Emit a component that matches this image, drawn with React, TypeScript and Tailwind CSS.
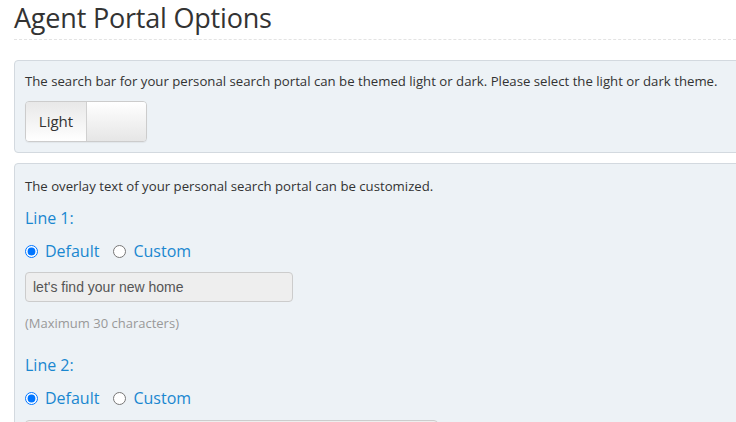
const sans = { fontFamily: '"Segoe UI", "Open Sans", "Noto Sans", sans-serif' };

const RadioRow = ({ name }: { name: string }) => (
  <div className="flex items-center text-[16px] text-[#1a87d0]">
    <label className="flex items-center">
      <input type="radio" name={name} defaultChecked className="m-0 h-[13px] w-[13px] accent-[#0075ff]" />
      <span className="ml-[7px]">Default</span>
    </label>
    <label className="ml-[14px] flex items-center">
      <input type="radio" name={name} className="m-0 h-[13px] w-[13px]" />
      <span className="ml-[7px]">Custom</span>
    </label>
  </div>
);

export default function App() {
  return (
    <div className="h-[422px] w-[736px] overflow-hidden bg-white pl-[14px] text-[#333]" style={sans}>
      <h1 className="mt-[1px] border-b border-dashed border-[#e3e3e3] pb-[4px] text-[27px] font-normal leading-[34px] tracking-[-0.2px] text-[#333]">
        Agent Portal Options
      </h1>

      <div className="mt-[20px] -mr-[10px] rounded-[4px] border border-[#d3d9df] bg-[#edf2f6] px-[10px] pt-[11px] pb-[10px]">
        <p className="text-[13.2px] leading-[18px]">
          The search bar for your personal search portal can be themed light or dark. Please select the light or dark theme.
        </p>
        <div className="mt-[11px] flex h-[41px] w-[122px] overflow-hidden rounded-[4px] border border-[#cccccc] shadow-[0_1px_1px_rgba(0,0,0,0.05)]">
          <div className="flex w-[61px] items-center justify-center bg-gradient-to-b from-[#e8e8e8] to-[#ffffff] text-[15px] text-[#333]">
            Light
          </div>
          <div className="w-[61px] border-l border-[#d0d0d0] bg-gradient-to-b from-[#ffffff] to-[#e6e6e6]" />
        </div>
      </div>

      <div className="mt-[10px] -mr-[10px] h-[300px] rounded-[4px] border border-[#d3d9df] bg-[#edf2f6] px-[10px] pt-[13px]">
        <p className="text-[13.2px] leading-[18px]">
          The overlay text of your personal search portal can be customized.
        </p>

        <div className="mt-[12px] text-[16px] leading-[22px] text-[#1a87d0]">Line 1:</div>
        <div className="mt-[10px]">
          <RadioRow name="line1" />
        </div>
        <div
          className="mt-[9px] flex h-[30px] w-[268px] items-center rounded-[4px] border border-[#cccccc] bg-[#eeeeee] px-[7px] text-[14px] text-[#555]"
          style={{ fontFamily: '"Liberation Sans", Arial, sans-serif' }}
        >
          let's find your new home
        </div>
        <div className="mt-[12px] text-[13px] leading-[18px] text-[#999]">(Maximum 30 characters)</div>

        <div className="mt-[22px] text-[16px] leading-[22px] text-[#1a87d0]">Line 2:</div>
        <div className="mt-[10px]">
          <RadioRow name="line2" />
        </div>
        <div className="mt-[10px] h-[30px] w-[413px] rounded-[4px] border border-[#cccccc] bg-[#eeeeee]" />
      </div>
    </div>
  );
}
